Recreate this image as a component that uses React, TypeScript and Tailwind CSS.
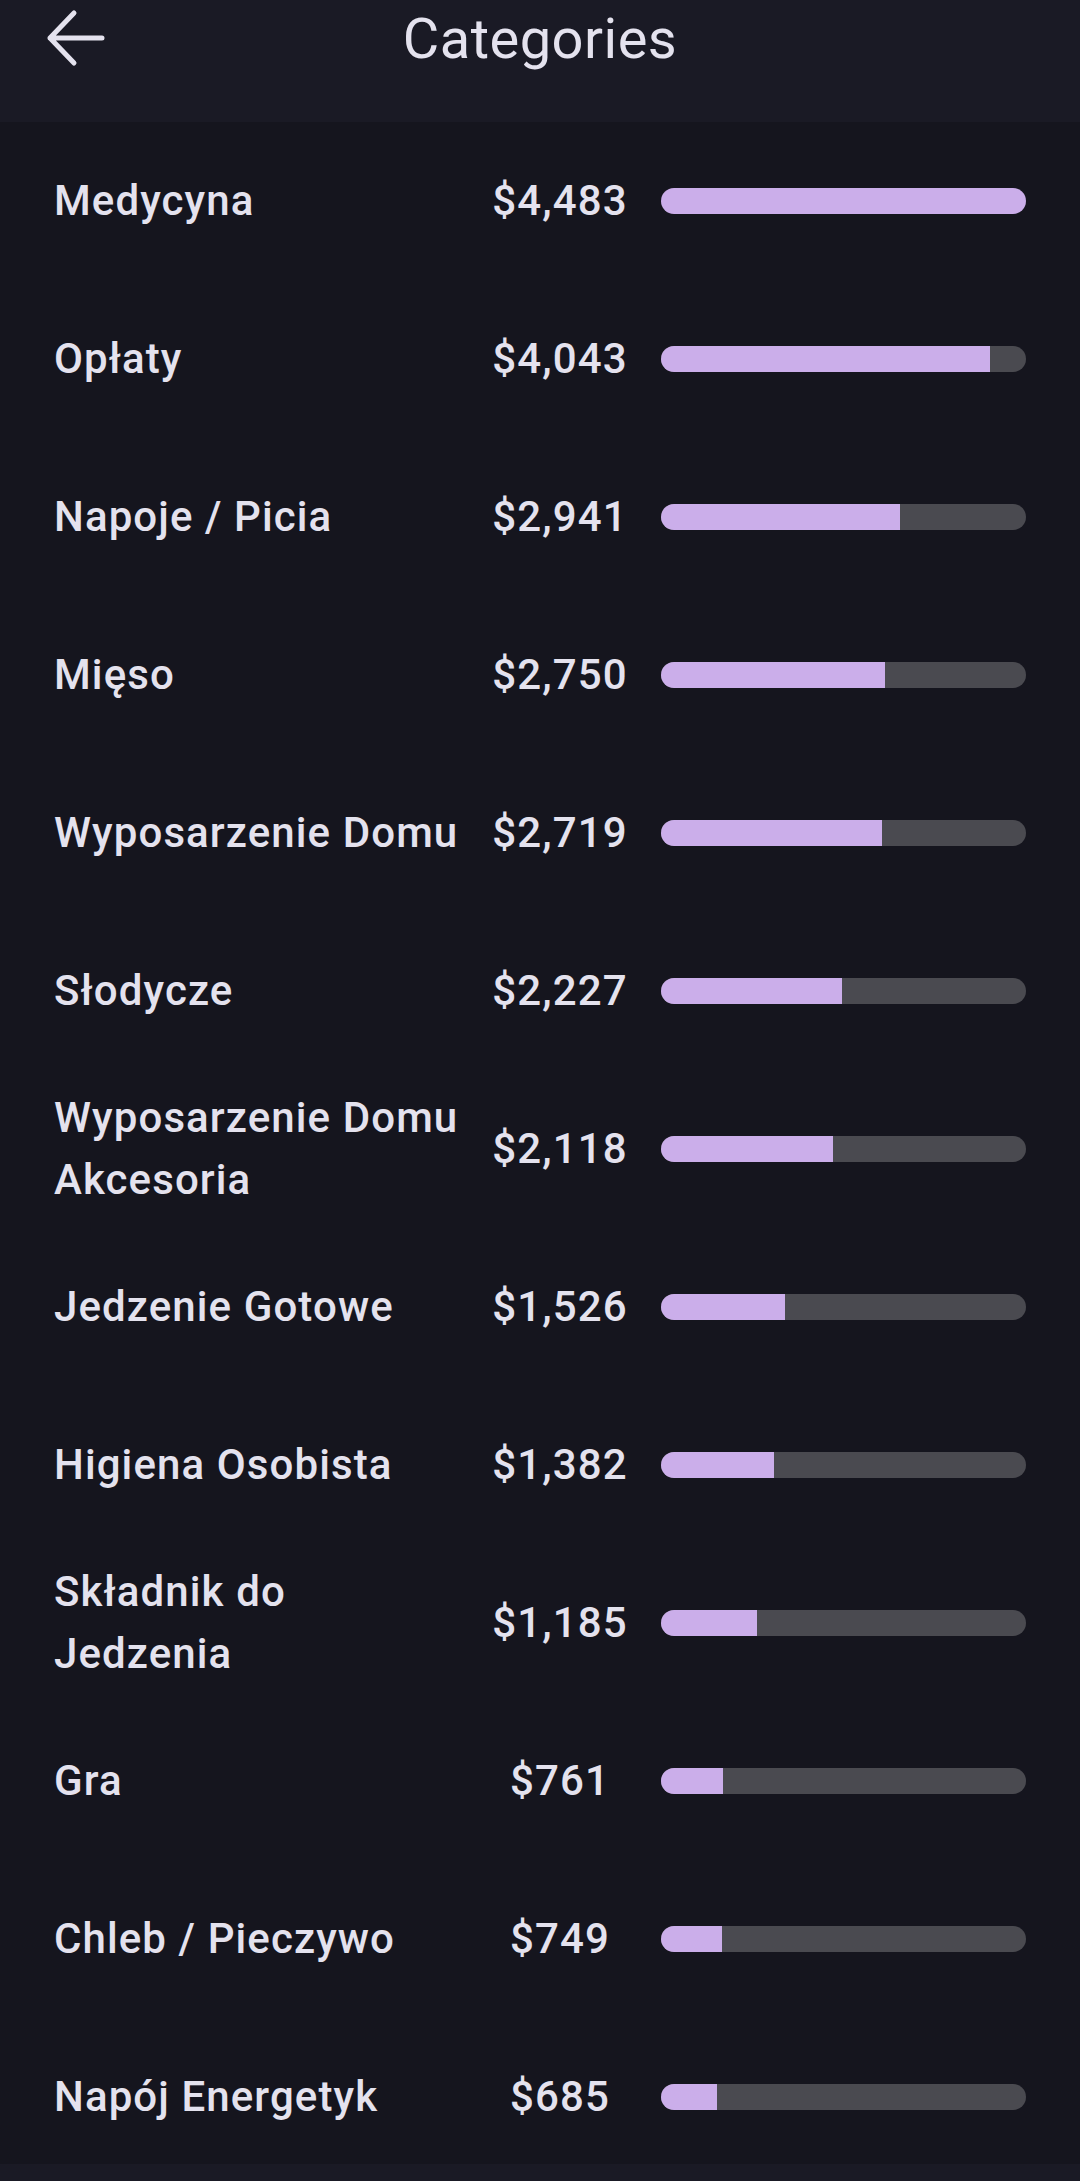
const categories = [
  { name: 'Medycyna', amount: 4483 },
  { name: 'Opłaty', amount: 4043 },
  { name: 'Napoje / Picia', amount: 2941 },
  { name: 'Mięso', amount: 2750 },
  { name: 'Wyposarzenie Domu', amount: 2719 },
  { name: 'Słodycze', amount: 2227 },
  { name: 'Wyposarzenie Domu Akcesoria', amount: 2118 },
  { name: 'Jedzenie Gotowe', amount: 1526 },
  { name: 'Higiena Osobista', amount: 1382 },
  { name: 'Składnik do Jedzenia', amount: 1185 },
  { name: 'Gra', amount: 761 },
  { name: 'Chleb / Pieczywo', amount: 749 },
  { name: 'Napój Energetyk', amount: 685 },
];

const max = Math.max(...categories.map(c => c.amount));

function BackArrow() {
  return (
    <svg width="64" height="60" viewBox="0 0 64 60" fill="none" className="absolute left-[43px] top-[8px]">
      <path
        d="M59 30H7M31 5 7 30l24 25"
        stroke="#e4e2ee"
        strokeWidth="5"
        strokeLinecap="round"
        strokeLinejoin="round"
      />
    </svg>
  );
}

export default function App() {
  return (
    <div
      className="relative h-[2181px] w-[1080px] overflow-hidden bg-[#15151e] text-[#e4e2ee]"
      style={{ fontFamily: 'Roboto, "Noto Sans", sans-serif' }}
    >
      <header className="relative flex h-[122px] justify-center bg-[#1a1a25] pt-[11px]">
        <BackArrow />
        <h1 className="text-[56px] font-normal leading-none tracking-[0.5px]">Categories</h1>
      </header>

      <ul>
        {categories.map(cat => (
          <li key={cat.name} className="flex h-[158px] items-center px-[54px]">
            <span className="w-[410px] text-[42px] font-medium leading-[62px] tracking-[1.1px]">{cat.name}</span>
            <span className="w-[192px] text-center text-[42px] font-medium leading-[62px] tracking-[1.1px]">
              ${cat.amount.toLocaleString('en-US')}
            </span>
            <div className="ml-[5px] h-[26px] flex-1 overflow-hidden rounded-full bg-[#4a4a50]">
              <div className="h-full bg-[#cbaeea]" style={{ width: `${(cat.amount / max) * 100}%` }} />
            </div>
          </li>
        ))}
      </ul>

      <div className="absolute bottom-0 left-0 h-[17px] w-full bg-[#1a1a25]" />
    </div>
  );
}
